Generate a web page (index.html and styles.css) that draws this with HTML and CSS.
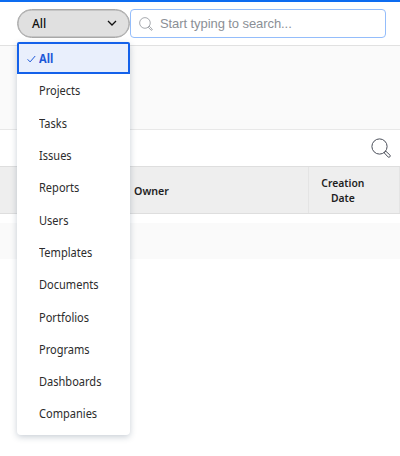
FILE: index.html
```html
<!DOCTYPE html>
<html lang="en">
<head>
<meta charset="utf-8">
<title>Search</title>
<link rel="stylesheet" href="styles.css">
</head>
<body>
<header class="topbar">
  <div class="picker">
    <button class="picker-button"><span>All</span>
      <svg class="chevron" viewBox="0 0 10 6"><path d="M1 1l4 4 4-4"/></svg>
    </button>
    <ul class="menu">
      <li class="option selected"><svg class="check" viewBox="0 0 9 8"><path d="M.6 4.3l2.5 2.6L8.2 1"/></svg><span>All</span></li>
      <li class="option"><span>Projects</span></li>
      <li class="option"><span>Tasks</span></li>
      <li class="option"><span>Issues</span></li>
      <li class="option"><span>Reports</span></li>
      <li class="option"><span>Users</span></li>
      <li class="option"><span>Templates</span></li>
      <li class="option"><span>Documents</span></li>
      <li class="option"><span>Portfolios</span></li>
      <li class="option"><span>Programs</span></li>
      <li class="option"><span>Dashboards</span></li>
      <li class="option"><span>Companies</span></li>
    </ul>
  </div>
  <div class="search">
    <svg class="search-icon" viewBox="0 0 20 20"><circle cx="8.5" cy="8.5" r="7.6"/><path d="M13.2 14.6l1.4-1.4 4 3.8c1.1 1.1-.5 2.7-1.6 1.6z"/></svg>
    <span>Start typing to search...</span>
  </div>
</header>
<section class="band"></section>
<div class="toolbar">
  <svg class="find-icon" viewBox="0 0 20 20"><circle cx="8.5" cy="8.5" r="7.6"/><path d="M13.2 14.8l1.6-1.6 4.1 3.8c1.2 1.2-.7 3.1-1.9 1.9z"/></svg>
</div>
<div class="table-head">
  <div class="col owner"><span>Owner</span></div>
  <div class="col created"><span>Creation<br>Date</span></div>
</div>
<div class="table-row"></div>
</body>
</html>
```
FILE: styles.css
```css
* { box-sizing: border-box; }
body {
  margin: 0;
  height: 456px;
  overflow: hidden;
  background: #fff;
  color: #2c2c2c;
  font-family: "Noto Sans", sans-serif;
  font-size: 12px;
}
svg { display: block; fill: none; stroke: currentColor; flex: none; }
.topbar {
  display: flex;
  height: 46px;
  padding: 7px 0 0 17px;
  border-top: 2px solid #0d6cf0;
  border-bottom: 1px solid #e1e1e1;
}
.picker { position: relative; width: 113px; }
.picker-button {
  display: flex;
  align-items: center;
  justify-content: space-between;
  width: 113px;
  height: 29px;
  padding: 0 12px 1px 14px;
  border: 1px solid #a9a9a9;
  border-radius: 15px;
  background: #e0e0e0;
  box-shadow: inset 0 0 0 .5px #a9a9a9;
  color: #111;
  font: 500 12px "Noto Sans", sans-serif;
}
.chevron { width: 10px; height: 6px; stroke-width: 1.3; }
.menu {
  position: absolute;
  top: 33px;
  left: 0;
  z-index: 1;
  width: 113px;
  height: 393px;
  margin: 0;
  padding: 0;
  list-style: none;
  background: #fff;
  border-radius: 4px;
  box-shadow: 0 2px 6px rgba(40, 65, 90, .25);
}
.option {
  display: flex;
  align-items: center;
  height: 32.3px;
  padding: 1px 0 0 22px;
}
.option span { transform: scaleX(.92); transform-origin: left; }
.option.selected {
  gap: 3px;
  padding-left: 8px;
  border: 2px solid #1461ea;
  border-radius: 2px 2px 0 0;
  background: #e9effc;
  color: #1d58d8;
  font-weight: 700;
}
.check { width: 9px; height: 8px; stroke-width: 1; }
.search {
  display: flex;
  align-items: center;
  gap: 7px;
  width: 256px;
  height: 29px;
  padding: 0 8px;
  border: 1px solid #94bdfb;
  border-radius: 4px;
  background: #fff;
  color: #8b8f96;
  font: 13px "Liberation Sans", Arial, sans-serif;
  letter-spacing: -.08px;
}
.search-icon { width: 14px; height: 14px; stroke-width: 1.1; }
.band { height: 84px; background: #fafafa; border-bottom: 1px solid #e8e8e8; }
.toolbar { display: flex; justify-content: flex-end; height: 36px; padding: 8px 9px 0 0; }
.find-icon { width: 20px; height: 20px; color: #4b4f5a; stroke-width: 1; }
.table-head {
  display: flex;
  height: 48px;
  border-top: 1px solid #dedede;
  border-bottom: 1px solid #dedede;
  background: #eee;
  color: #1f1f1f;
  font-size: 11px;
  font-weight: 600;
  line-height: 15px;
}
.col { display: flex; align-items: center; border-right: 1px solid #e4e4e4; }
.owner { width: 309px; padding-left: 134px; }
.owner span { transform: scaleX(.97); transform-origin: left; }
.created { width: 91px; padding-right: 22px; justify-content: center; text-align: center; }
.created span { transform: scaleX(.94); }
.table-row { height: 36px; margin-top: 9px; background: #fafafa; }
```
